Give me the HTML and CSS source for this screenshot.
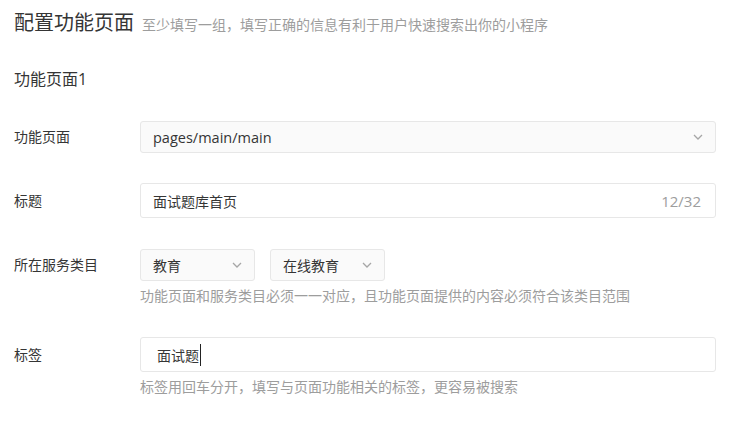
FILE: index.html
```html
<!DOCTYPE html>
<html lang="zh-CN">
<head>
<meta charset="utf-8">
<title>配置功能页面</title>
<link rel="stylesheet" href="styles.css">
</head>
<body>
<div class="page">
  <div class="header">
    <h1 class="title">配置功能页面</h1>
    <span class="subtitle">至少填写一组，填写正确的信息有利于用户快速搜索出你的小程序</span>
  </div>
  <div class="section-title">功能页面1</div>

  <div class="row row-first">
    <div class="label label-select">功能页面</div>
    <div class="field">
      <div class="select select-full">
        <span class="select-text">pages/main/main</span>
        <svg class="chev" width="10" height="6" viewBox="0 0 10 6"><path d="M1 1l4 4 4-4" fill="none" stroke="#a6a6a6" stroke-width="1.3"/></svg>
      </div>
    </div>
  </div>

  <div class="row row-title">
    <div class="label label-input">标题</div>
    <div class="field">
      <div class="input">
        <span class="input-text">面试题库首页</span>
        <span class="count">12/32</span>
      </div>
    </div>
  </div>

  <div class="row row-cat">
    <div class="label label-select">所在服务类目</div>
    <div class="field">
      <div class="select-group">
        <div class="select select-small">
          <span class="select-text">教育</span>
          <svg class="chev" width="10" height="6" viewBox="0 0 10 6"><path d="M1 1l4 4 4-4" fill="none" stroke="#a6a6a6" stroke-width="1.3"/></svg>
        </div>
        <div class="select select-small">
          <span class="select-text">在线教育</span>
          <svg class="chev" width="10" height="6" viewBox="0 0 10 6"><path d="M1 1l4 4 4-4" fill="none" stroke="#a6a6a6" stroke-width="1.3"/></svg>
        </div>
      </div>
      <div class="help">功能页面和服务类目必须一一对应，且功能页面提供的内容必须符合该类目范围</div>
    </div>
  </div>

  <div class="row row-tags">
    <div class="label label-input">标签</div>
    <div class="field">
      <div class="input input-tags">
        <span class="input-text">面试题</span><span class="caret"></span>
      </div>
      <div class="help">标签用回车分开，填写与页面功能相关的标签，更容易被搜索</div>
    </div>
  </div>
</div>
</body>
</html>
```

FILE: styles.css
```css
* { box-sizing: border-box; }
html, body { margin: 0; padding: 0; background: #ffffff; }
body {
  font-family: "Open Sans", "Noto Sans CJK SC", sans-serif;
  font-size: 14px;
  color: #353535;
}
.page { padding: 9px 15px 0 14px; }
.header { display: flex; align-items: baseline; line-height: 28px; }
.title { margin: 0; font-size: 20px; font-weight: normal; color: #353535; }
.subtitle { margin-left: 8px; font-size: 14px; color: #9d9d9d; }
.section-title { margin-top: 28px; font-size: 16px; line-height: 24px; color: #353535; }

.row { display: flex; align-items: flex-start; }
.row-first { margin-top: 30px; }
.row-title { margin-top: 30px; }
.row-cat { margin-top: 31px; }
.row-tags { margin-top: 31px; }
.label { width: 126px; flex: none; font-size: 14px; color: #353535; }
.label-select { line-height: 32px; }
.label-input { line-height: 35px; }
.field { flex: 1; }

.select {
  display: flex; align-items: center; justify-content: space-between;
  height: 32px; padding: 0 12px;
  background: #fafafa; border: 1px solid #e7e7e7; border-radius: 3px;
  color: #353535;
}
.select-text { font-size: 14px; }
.select-full .select-text { font-size: 14.5px; }
.select-group { display: flex; gap: 15px; }
.select-small { width: 115px; }
.chev { flex: none; }

.input {
  display: flex; align-items: center; justify-content: space-between;
  height: 35px; padding: 0 14px 0 12px;
  background: #ffffff; border: 1px solid #e7e7e7; border-radius: 3px;
}
.input-text { font-size: 14px; color: #353535; }
.count { font-size: 15px; color: #9d9d9d; }
.input-tags { justify-content: flex-start; padding-left: 16px; }
.caret { display: inline-block; width: 1px; height: 22px; background: #222; margin-left: 1px; }

.help { margin-top: 5px; line-height: 20px; font-size: 14px; color: #9d9d9d; }
```
